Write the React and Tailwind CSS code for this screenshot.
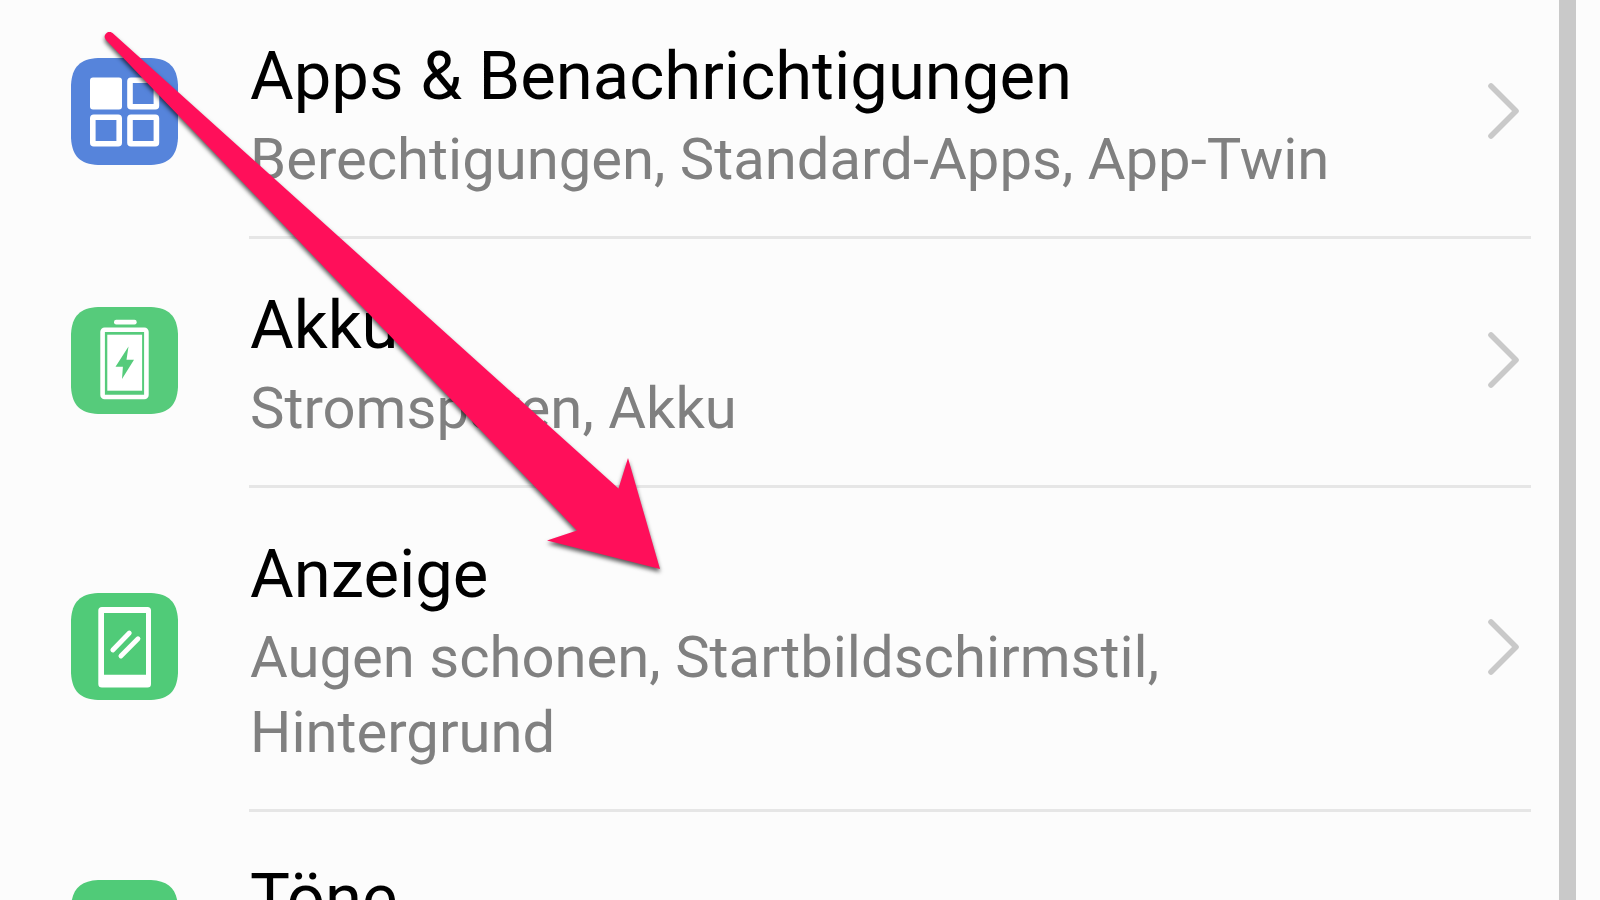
const items = [
  {
    title: "Apps & Benachrichtigungen",
    text: "Berechtigungen, Standard-Apps, App-Twin",
    icon: <AppsIcon />,
  },
  { title: "Akku", text: "Stromsparen, Akku", icon: <BatteryIcon /> },
  {
    title: "Anzeige",
    text: "Augen schonen, Startbildschirmstil, Hintergrund",
    icon: <DisplayIcon />,
  },
  { title: "Töne", text: "", icon: <Tile className="text-[#50cb78]" /> },
];

function Tile({ className, children }) {
  return (
    <svg
      viewBox="0 0 107 107"
      className={`w-[107px] h-[107px] shrink-0 ${className}`}
      aria-hidden="true"
    >
      <path
        d="M27 0H80C98 1 106 9 107 27V80C106 98 98 106 80 107H27C9 106 1 98 0 80V27C1 9 9 1 27 0Z"
        fill="currentColor"
      />
      {children}
    </svg>
  );
}

function AppsIcon() {
  return (
    <Tile className="text-[#5684db]">
      <rect x="19" y="19.5" width="32" height="32" rx="3" fill="#fff" />
      <g fill="none" stroke="#fff" strokeWidth="5.6">
        <rect x="59" y="22.3" width="26.4" height="26.4" rx="1" />
        <rect x="21.8" y="59.3" width="26.4" height="26.4" rx="1" />
        <rect x="59" y="59.3" width="26.4" height="26.4" rx="1" />
      </g>
    </Tile>
  );
}

function BatteryIcon() {
  return (
    <Tile className="text-[#56cb7b]">
      <rect x="43" y="12.7" width="22.7" height="4.8" rx="2.2" fill="#fff" />
      <rect x="31.6" y="22.7" width="43.8" height="67.3" rx="2" fill="none" stroke="#fff" strokeWidth="4.6" />
      <rect x="36.3" y="27.7" width="34.8" height="56" fill="#fff" />
      <path d="M57.5 39.5L55.5 52.7H63L51 72L51.9 59.7H44.5Z" fill="currentColor" />
    </Tile>
  );
}

function DisplayIcon() {
  return (
    <Tile className="text-[#50cb78]">
      <path
        d="M31 14H76.5Q80 14 80 17.5V91Q80 94.5 76.5 94.5H31Q27.3 94.5 27.3 91V17.5Q27.3 14 31 14ZM33 20V81.7H75V20Z"
        fill="#fff"
        fillRule="evenodd"
      />
      <path d="M58.3 40L41.8 57M67 45.8L49.9 63" stroke="#fff" strokeWidth="4.8" strokeLinecap="round" />
    </Tile>
  );
}

function Chevron() {
  return (
    <svg viewBox="0 0 32 56" className="w-8 h-14 shrink-0" fill="none" aria-hidden="true">
      <path
        d="M4 3L29 28L4 53"
        stroke="#c9c9c9"
        strokeWidth="5.6"
        strokeLinecap="round"
        strokeLinejoin="round"
      />
    </svg>
  );
}

function Arrow() {
  return (
    <svg
      viewBox="0 0 700 600"
      className="absolute left-0 top-0 w-[700px] h-[600px] pointer-events-none drop-shadow-[0_3px_2px_rgba(0,0,0,0.65)]"
      aria-hidden="true"
    >
      <path
        d="M112.5 33L618.5 488.5L628 458L660 569L547 540.5L577 530.5L106 40A4.8 4.8 0 0 1 112.5 33Z"
        fill="#ff0f5a"
      />
    </svg>
  );
}

export default function App() {
  return (
    <div className="relative flex h-screen overflow-hidden bg-[#fcfcfc] pr-6 font-[Roboto,sans-serif]">
      <main className="flex-1 min-w-0 pr-7">
        <ul className="-mt-[10px]">
          {items.map((item) => (
            <li key={item.title}>
              <a href="#" className="flex items-center pl-[71px] pr-3 pb-1">
                {item.icon}
                <div className="flex-1 min-w-0 ml-[72px] mr-20 pt-10 pb-[35px]">
                  <h2 className="text-[67px] leading-[92px] text-black">
                    {item.title}
                  </h2>
                  <p className="min-h-[75px] text-[58px] leading-[75px] text-[#808080]">
                    {item.text}
                  </p>
                </div>
                <Chevron />
              </a>
              <div className="ml-[249px] h-[3px] bg-[#e6e6e6]" />
            </li>
          ))}
        </ul>
      </main>

      {/* scrollbar */}
      <div className="w-[17px] bg-[#c9c9c9]" />

      <Arrow />
    </div>
  );
}
